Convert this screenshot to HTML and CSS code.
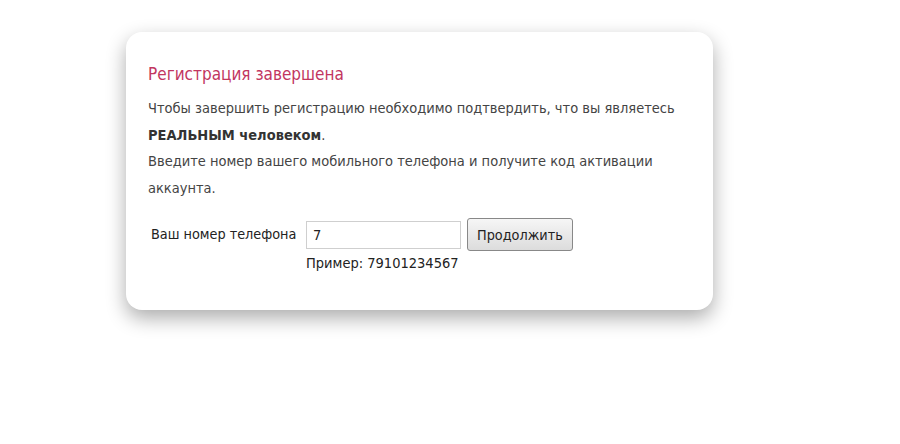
FILE: index.html
```html
<!DOCTYPE html>
<html lang="ru">
<head>
<meta charset="utf-8">
<link rel="stylesheet" href="styles.css">
</head>
<body>
<div class="page">
  <div class="card">
    <h1 class="title">Регистрация завершена</h1>
    <p class="text">Чтобы завершить регистрацию необходимо подтвердить, что вы являетесь <b>РЕАЛЬНЫМ человеком</b>.</p>
    <p class="text">Введите номер вашего мобильного телефона и получите код активации аккаунта.</p>
    <form class="form">
      <div class="row">
        <label class="label">Ваш номер телефона</label>
        <div class="field">
          <div class="controls">
            <input class="input" type="text" value="7">
            <button class="btn" type="button">Продолжить</button>
          </div>
          <div class="hint">Пример: 79101234567</div>
        </div>
      </div>
    </form>
  </div>
</div>
</body>
</html>
```
FILE: styles.css
```css
html, body { margin: 0; padding: 0; background: #fff; }
body { font-family: "DejaVu Sans Condensed", "DejaVu Sans", sans-serif; color: #444; min-height: 444px; }
.page { padding: 32px 0 100px 126px; }
.card {
  width: 587px;
  height: 278px;
  box-sizing: border-box;
  background: #fff;
  border-radius: 16px;
  box-shadow: 0 8px 20px rgba(0,0,0,0.33);
  padding: 30px 22px 0 22px;
}
.title { margin: 0 0 9px; font-size: 17px; font-weight: normal; color: #c2365f; line-height: 24px; }
.text { margin: 0; font-size: 14.5px; line-height: 26.5px; }
.text b { color: #333; }
.form { margin-top: 17px; }
.row { display: flex; align-items: flex-start; }
.label { font-size: 14.3px; color: #222; width: 158px; padding-top: 8px; padding-left: 3px; box-sizing: border-box; }
.field { display: flex; flex-direction: column; }
.controls { display: flex; align-items: center; gap: 6px; }
.input { width: 155px; height: 28px; box-sizing: border-box; border: 1px solid #cfcfcf; padding: 0 6px; font-family: inherit; font-size: 14.5px; color: #222; outline: none; }
.btn { height: 33px; padding: 0 9px; box-sizing: border-box; border: 1px solid #888; border-radius: 3px; background: linear-gradient(#f6f6f6, #dcdcdc); font-family: inherit; font-size: 14.3px; color: #222; }
.hint { font-size: 14.5px; color: #222; margin-top: 4px; }
```
